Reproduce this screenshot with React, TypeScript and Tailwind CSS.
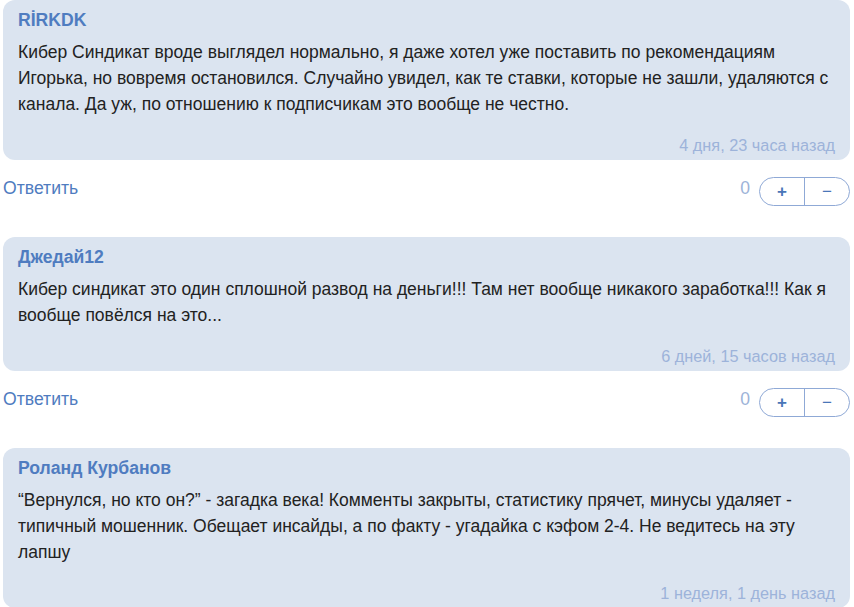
import { useState } from "react";

interface Comment {
    id: number;
    author: string;
    text: string;
    date: string;
    score: number;
}

const comments: Comment[] = [
    {
        id: 1,
        author: "RİRKDK",
        text: "Кибер Синдикат вроде выглядел нормально, я даже хотел уже поставить по рекомендациям Игорька, но вовремя остановился. Случайно увидел, как те ставки, которые не зашли, удаляются с канала. Да уж, по отношению к подписчикам это вообще не честно.",
        date: "4 дня, 23 часа назад",
        score: 0,
    },
    {
        id: 2,
        author: "Джедай12",
        text: "Кибер синдикат это один сплошной развод на деньги!!! Там нет вообще никакого заработка!!! Как я вообще повёлся на это...",
        date: "6 дней, 15 часов назад",
        score: 0,
    },
    {
        id: 3,
        author: "Роланд Курбанов",
        text: "“Вернулся, но кто он?” - загадка века! Комменты закрыты, статистику прячет, минусы удаляет - типичный мошенник. Обещает инсайды, а по факту - угадайка с кэфом 2-4. Не ведитесь на эту лапшу",
        date: "1 неделя, 1 день назад",
        score: 0,
    },
];

function CommentCard({ comment, last }: { comment: Comment; last: boolean }) {
    const [score, setScore] = useState(comment.score);

    return (
        <div>
            <div className="rounded-xl bg-[#dbe4f0] px-[15px] pt-[10px] pb-[5px]">
                <div className="text-[17.6px] leading-[20px] font-bold text-[#4f7cc0]">{comment.author}</div>
                <p className="mt-[9px] text-[17.5px] leading-[26px] text-[#222]">{comment.text}</p>
                <div className="mt-[18px] text-right text-[16.3px] leading-[20px] text-[#9db3da]">{comment.date}</div>
            </div>
            {!last && (
                <div className="flex items-start justify-between pt-[17px] pb-[31px]">
                    <a href="#" className="text-[17.6px] leading-[22px] text-[#4f7cc0]">Ответить</a>
                    <div className="flex items-center">
                        <span className="mr-[9px] mt-[-6px] text-[17.6px] text-[#9db3d8]">{score}</span>
                        <div className="flex h-[29px] w-[91px] rounded-full border border-[#8fa9d6]">
                            <button onClick={() => setScore(s => s + 1)} className="flex-1 text-[17px] font-semibold text-[#4a76b8]">+</button>
                            <div className="w-px bg-[#8fa9d6]" />
                            <button onClick={() => setScore(s => s - 1)} className="flex-1 text-[17px] text-[#4a76b8]">−</button>
                        </div>
                    </div>
                </div>
            )}
        </div>
    );
}

export default function App() {
    return (
        <div className="min-h-screen bg-white pl-[3px] pr-[4px] font-['Liberation_Sans',Arial,sans-serif]">
            {comments.map((c, i) => (
                <CommentCard key={c.id} comment={c} last={i === comments.length - 1} />
            ))}
        </div>
    );
}
